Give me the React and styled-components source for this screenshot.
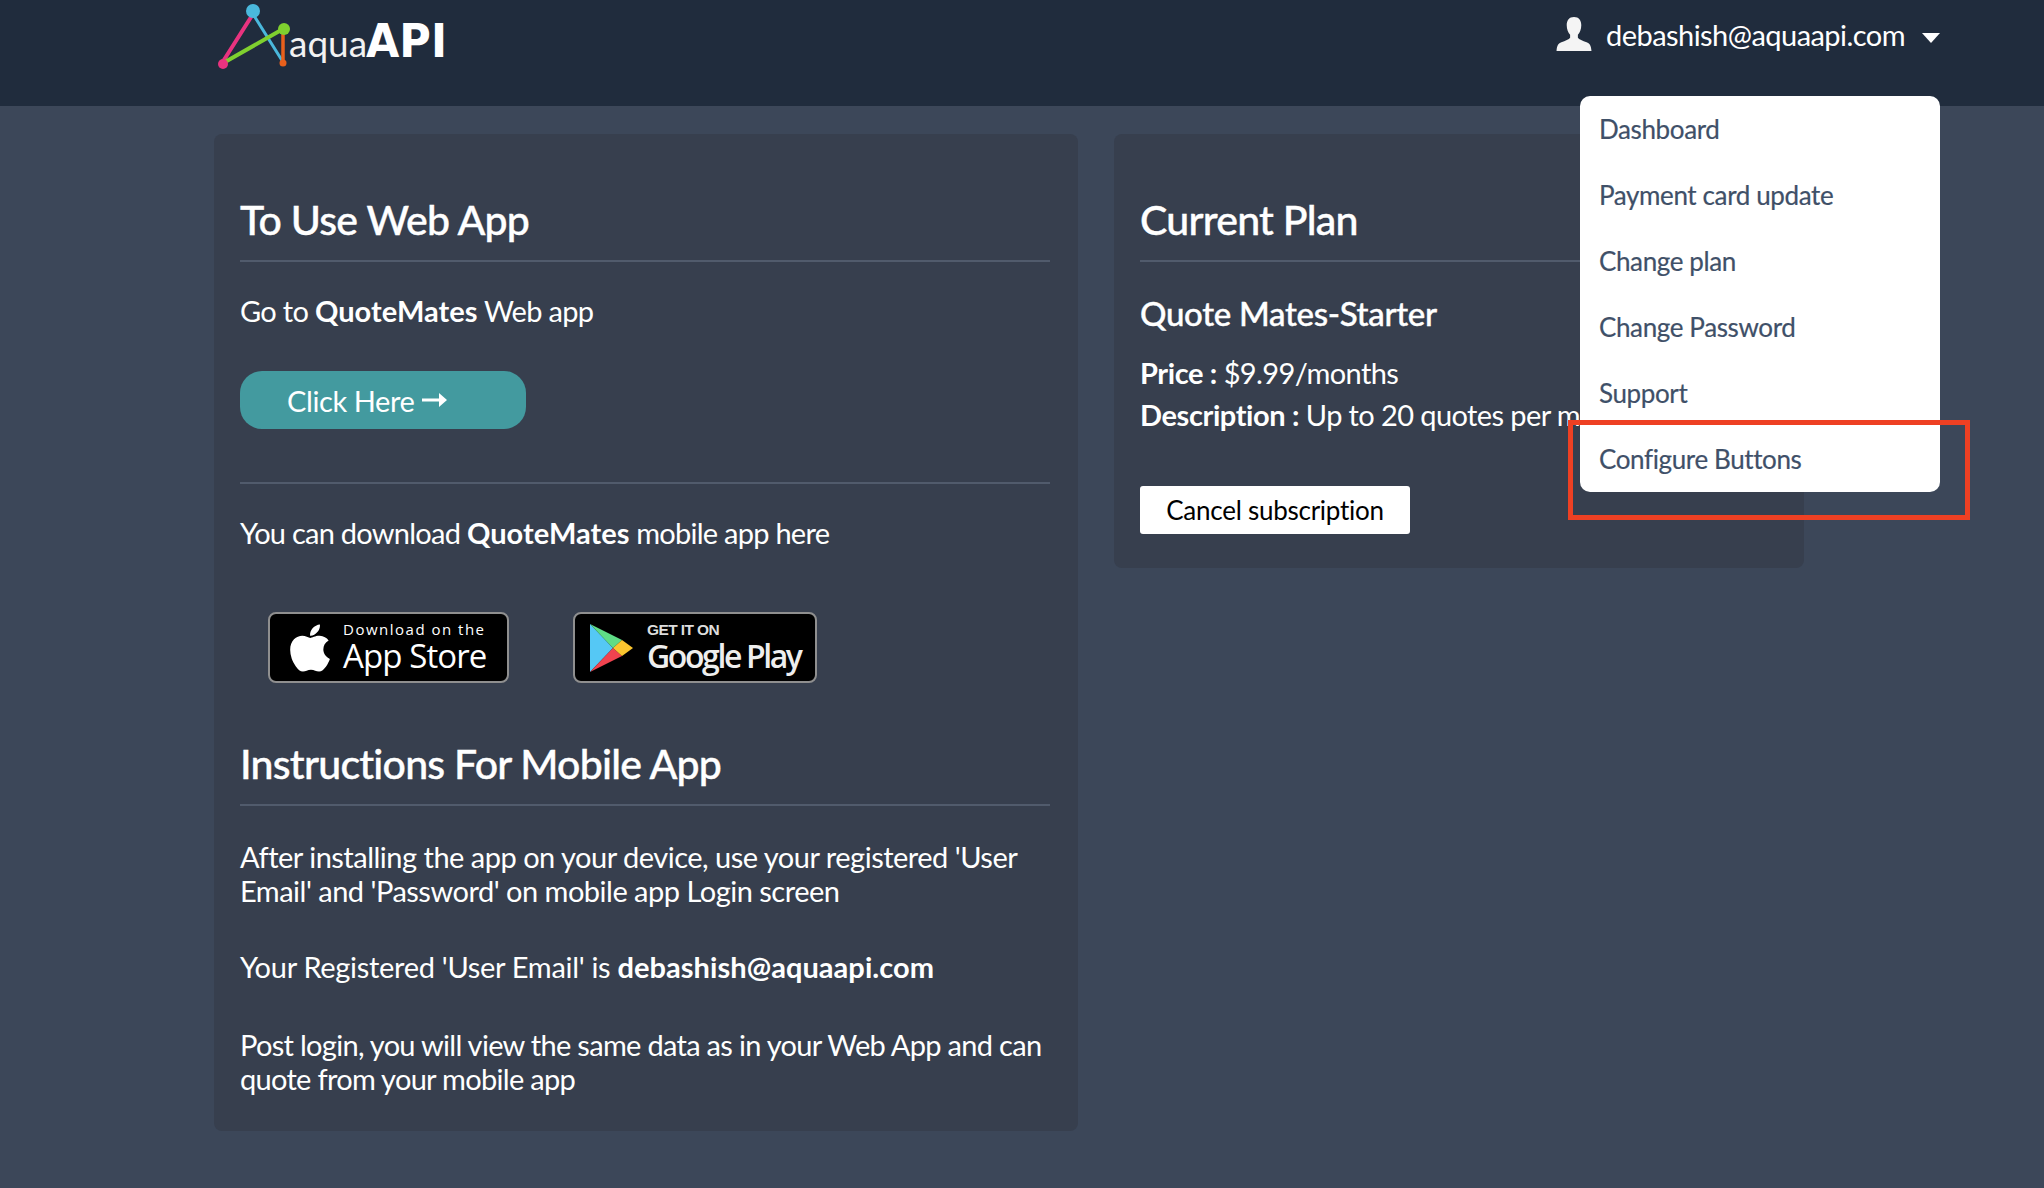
import React from "react";
import styled, { createGlobalStyle } from "styled-components";
import { FaApple } from "react-icons/fa";

const Global = createGlobalStyle`
  html, body { margin: 0; padding: 0; background: #3c4759; }
  body { font-family: Lato, "Open Sans", sans-serif; color: #fff; }
`;

const Page = styled.div`
  position: relative;
  width: 2044px;
  height: 1188px;
  overflow: hidden;
  background: #3c4759;
`;

const Header = styled.header`
  height: 106px;
  background: #202c3d;
  display: flex;
  justify-content: space-between;
  padding: 0 104px 0 217px;
  box-sizing: border-box;
`;

const LogoBox = styled.svg`
  width: 240px;
  height: 74px;
  display: block;
`;

const UserBox = styled.div`
  display: flex;
  align-items: center;
  height: 68px;
  gap: 14px;
  font-size: 29px;
  letter-spacing: -0.55px;
  color: #fff;
`;

const Caret = styled.span`
  width: 0;
  height: 0;
  margin: 7px 0 0 3px;
  border-left: 9px solid transparent;
  border-right: 9px solid transparent;
  border-top: 10px solid #fff;
`;

const Main = styled.main`
  display: flex;
  align-items: flex-start;
  gap: 36px;
  padding: 28px 0 0 214px;
`;

const Card = styled.section`
  box-sizing: border-box;
  width: ${(p) => p.$width}px;
  height: ${(p) => p.$height}px;
  padding: 0 28px 0 26px;
  background: #373f4e;
  border-radius: 8px;
`;

const Title = styled.h2`
  margin: 0;
  padding-top: ${(p) => p.$top}px;
  height: 51px;
  font-size: 41px;
  line-height: 51px;
  font-weight: 500;
  letter-spacing: -0.75px;
  -webkit-text-stroke: 0.4px #fff;
  color: #fff;
  box-sizing: content-box;
`;

const Rule = styled.hr`
  margin: ${(p) => p.$top || 0}px 0 0;
  border: 0;
  height: 2px;
  background: #515b6c;
`;

const Text = styled.p`
  margin: ${(p) => p.$top}px 0 0;
  font-size: 29px;
  line-height: 34px;
  letter-spacing: ${(p) => p.$track ?? -0.7}px;
  font-weight: 400;
  color: #fff;
  b { font-weight: 700; letter-spacing: 0.05px; }
`;

const CtaButton = styled.button`
  display: flex;
  align-items: center;
  gap: 8px;
  box-sizing: border-box;
  width: 286px;
  height: 58px;
  margin-top: 43px;
  padding: 0 0 0 47px;
  border: 0;
  border-radius: 22px;
  background: #439a9f;
  color: #fff;
  font-family: inherit;
  font-size: 29px;
  letter-spacing: -0.4px;
`;

const Badges = styled.div`
  display: flex;
  gap: 64px;
  margin: 62px 0 0 28px;
`;

const Badge = styled.div`
  box-sizing: border-box;
  width: ${(p) => p.$width}px;
  height: 71px;
  display: flex;
  align-items: center;
  background: #000;
  border: 2px solid #8f8f8f;
  border-radius: 8px;
  color: #fff;
  padding-left: ${(p) => p.$pad}px;
  gap: ${(p) => p.$gap}px;
`;

const BadgeText = styled.div`
  display: flex;
  flex-direction: column;
`;

const BadgeSmall = styled.span`
  font-family: "Open Sans", sans-serif;
  font-size: 15px;
  line-height: 17px;
  letter-spacing: 1.5px;
  white-space: nowrap;
`;

const BadgeLarge = styled.span`
  font-family: "Open Sans", sans-serif;
  font-size: 33px;
  line-height: 36px;
  letter-spacing: -0.9px;
  white-space: nowrap;
`;

const PlaySmall = styled.span`
  font-family: "Liberation Sans", sans-serif;
  font-size: 15.500px;
  line-height: 17px;
  font-weight: 700;
  letter-spacing: -0.6px;
  color: #ddd;
  white-space: nowrap;
`;

const PlayLarge = styled.span`
  font-family: "Open Sans", sans-serif;
  font-size: 32px;
  line-height: 36px;
  letter-spacing: -2.4px;
  font-weight: 600;
  color: #eee;
  white-space: nowrap;
`;

const PlanName = styled.h3`
  margin: 30px 0 0;
  font-size: 33px;
  line-height: 42px;
  font-weight: 500;
  letter-spacing: -0.3px;
  -webkit-text-stroke: 0.4px #fff;
  color: #fff;
`;

const PlanText = styled.div`
  margin-top: 18px;
  font-size: 29px;
  line-height: 42px;
  letter-spacing: -0.6px;
  white-space: nowrap;
  b { font-weight: 700; letter-spacing: -0.4px; }
`;

const CancelButton = styled.button`
  display: block;
  width: 270px;
  height: 48px;
  margin-top: 50px;
  padding: 0;
  border: 0;
  border-radius: 3px;
  background: #fff;
  color: #000;
  font-family: inherit;
  font-size: 26px;
  letter-spacing: -0.25px;
`;

const Menu = styled.nav`
  position: absolute;
  left: 1580px;
  top: 96px;
  width: 360px;
  height: 396px;
  box-sizing: border-box;
  padding: 0 19px;
  background: #fff;
  border-radius: 10px;
  display: flex;
  flex-direction: column;
`;

const MenuItem = styled.div`
  height: 66px;
  line-height: 66px;
  font-size: 26px;
  letter-spacing: -0.38px;
  color: #3f5068;
  -webkit-text-stroke: 0.2px #3f5068;
  white-space: nowrap;
`;

const Highlight = styled.div`
  position: absolute;
  left: 1568px;
  top: 420px;
  width: 402px;
  height: 100px;
  box-sizing: border-box;
  border: 5px solid #ee4023;
`;

const Logo = () => (
  <LogoBox viewBox="0 0 240 74">
    <g fill="none" strokeLinecap="round">
      <path d="M5 63 L36 14" stroke="#e8337f" strokeWidth="4" />
      <path d="M36 14 L66 62" stroke="#4ab8dc" strokeWidth="3" />
      <path d="M66 62 L66 30" stroke="#e8601c" strokeWidth="3.5" />
      <path d="M8 62 L66 29" stroke="#7fd02f" strokeWidth="4" />
    </g>
    <circle cx="36" cy="11" r="7" fill="#4ab8dc" />
    <circle cx="6" cy="64" r="5" fill="#e8337f" />
    <circle cx="66" cy="63" r="3.5" fill="#e8601c" />
    <circle cx="67" cy="29" r="6" fill="#7fd02f" />
    <text x="72" y="57" fontFamily="Lato, sans-serif" fontSize="37" fill="#f2f2f2">aqua</text>
    <text x="149" y="57" fontFamily="'DejaVu Sans', sans-serif" fontWeight="700" fontSize="47" fill="#fff" textLength="81" lengthAdjust="spacingAndGlyphs">API</text>
  </LogoBox>
);

const UserIcon = () => (
  <svg width="36" height="34" viewBox="0 0 36 35">
    <path fill="#f4f4f4" d="M18 0c5 0 7.500 3.500 7.500 8.500 0 4-1.500 7.500-3.500 9.800v3c1 1.700 5 3 9 4.700 3 1.200 4.500 3 5 9H0c.5-6 2-7.800 5-9 4-1.700 8-3 9-4.700v-3c-2-2.300-3.500-5.800-3.500-9.800C10.500 3.500 13 0 18 0z" />
  </svg>
);

const PlayIcon = () => (
  <svg width="44" height="50" viewBox="0 0 44 50">
    <path fill="#55c8f5" d="M1 1 L24 25 L1 49 Z" />
    <path fill="#5fdc86" d="M1 1 L33 17 L24 25 Z" />
    <path fill="#f0434f" d="M1 49 L33 33 L24 25 Z" />
    <path fill="#fbc52f" d="M33 17 L44 25 L33 33 L24 25 Z" />
  </svg>
);

const ArrowIcon = () => (
  <svg width="25" height="16" viewBox="0 0 25 16">
    <path fill="#fff" d="M0 6.500h17V1l8 7-8 7V9.500H0z" />
  </svg>
);

export default function App() {
  return (
    <Page>
      <Global />
      <Header>
        <Logo />
        <UserBox>
          <UserIcon />
          <span>debashish@aquaapi.com</span>
          <Caret />
        </UserBox>
      </Header>
      <Main>
        <Card $width={864} $height={997}>
          <Title $top={60}>To Use Web App</Title>
          <Rule $top={15} />
          <Text $top={32}>Go to <b>QuoteMates</b> Web app</Text>
          <CtaButton>Click Here <ArrowIcon /></CtaButton>
          <Rule $top={53} />
          <Text $top={32} $track={-0.75}>You can download <b>QuoteMates</b> mobile app here</Text>
          <Badges>
            <Badge $width={241} $pad={13} $gap={6}>
              <FaApple size={54} />
              <BadgeText>
                <BadgeSmall>Download on the</BadgeSmall>
                <BadgeLarge>App Store</BadgeLarge>
              </BadgeText>
            </Badge>
            <Badge $width={244} $pad={14} $gap={14}>
              <PlayIcon />
              <BadgeText>
                <PlaySmall>GET IT ON</PlaySmall>
                <PlayLarge>Google Play</PlayLarge>
              </BadgeText>
            </Badge>
          </Badges>
          <Title $top={55}>Instructions For Mobile App</Title>
          <Rule $top={15} />
          <Text $top={34} $track={-0.5}>After installing the app on your device, use your registered 'User Email' and 'Password' on mobile app Login screen</Text>
          <Text $top={42} $track={-0.3}>Your Registered 'User Email' is <b>debashish@aquaapi.com</b></Text>
          <Text $top={44} $track={-0.7}>Post login, you will view the same data as in your Web App and can quote from your mobile app</Text>
        </Card>
        <Card $width={690} $height={434}>
          <Title $top={60}>Current Plan</Title>
          <Rule $top={15} />
          <PlanName>Quote Mates-Starter</PlanName>
          <PlanText>
            <div><b>Price :</b> $9.99/months</div>
            <div><b>Description :</b> Up to 20 quotes per month</div>
          </PlanText>
          <CancelButton>Cancel subscription</CancelButton>
        </Card>
      </Main>
      <Menu>
        {["Dashboard", "Payment card update", "Change plan", "Change Password", "Support", "Configure Buttons"].map((m) => (
          <MenuItem key={m}>{m}</MenuItem>
        ))}
      </Menu>
      <Highlight />
    </Page>
  );
}
